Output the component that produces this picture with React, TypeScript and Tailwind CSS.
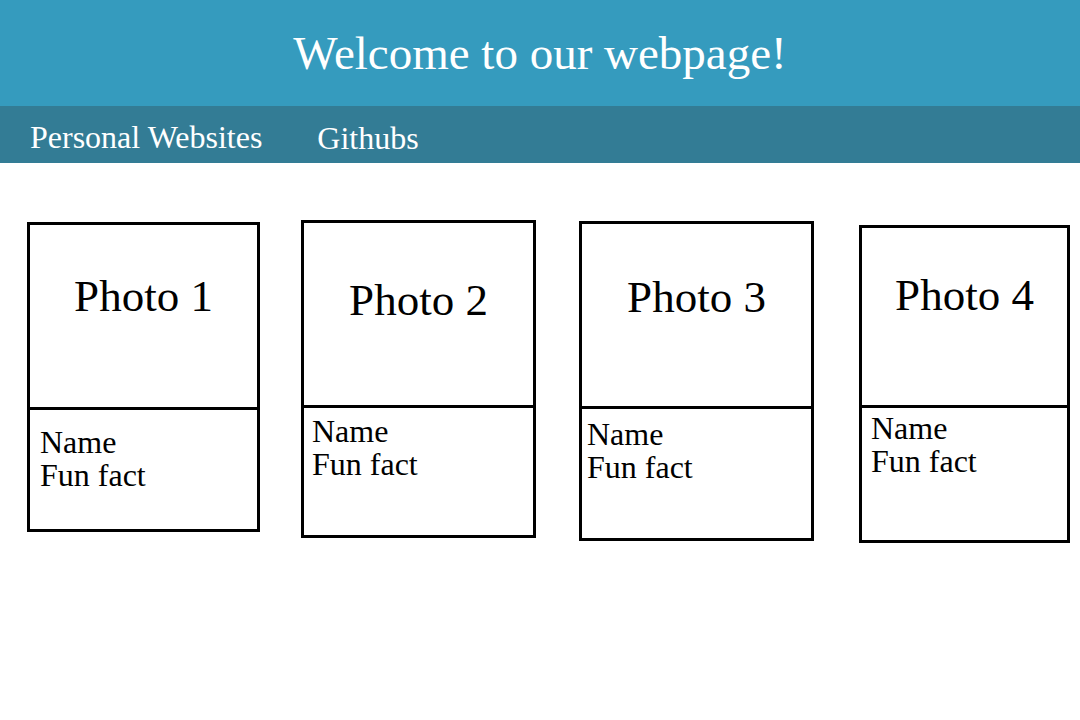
const serif = "[font-family:'Liberation_Serif','Times_New_Roman',serif]";

type Card = {
  label: string;
  box: string;
  top: string;
  photoPad: string;
  infoPad: string;
};

const cards: Card[] = [
  { label: "Photo 1", box: "ml-[27px] mt-[59px] w-[233px] h-[310px]", top: "h-[185px]", photoPad: "pt-[49px]", infoPad: "pt-[16px] pl-[10px]" },
  { label: "Photo 2", box: "ml-[41px] mt-[57px] w-[235px] h-[318px]", top: "h-[185px]", photoPad: "pt-[55px]", infoPad: "pt-[7px] pl-[8px]" },
  { label: "Photo 3", box: "ml-[43px] mt-[58px] w-[235px] h-[320px]", top: "h-[185px]", photoPad: "pt-[51px]", infoPad: "pt-[9px] pl-[5px]" },
  { label: "Photo 4", box: "ml-[45px] mt-[62px] w-[211px] h-[318px]", top: "h-[180px]", photoPad: "pt-[45px]", infoPad: "pt-[4px] pl-[9px]" },
];

export default function App() {
  return (
    <div className={`min-h-[720px] w-[1080px] bg-white ${serif}`}>
      <header className="flex h-[106px] items-center justify-center bg-[#359bbe]">
        <h1 className="text-[47px] leading-none text-white">Welcome to our webpage!</h1>
      </header>
      <nav className="flex h-[57px] items-center bg-[#337c95] pl-[30px] pt-[4px] text-white">
        <a className="text-[32px] leading-none">Personal Websites</a>
        <a className="ml-[55px] pt-[3px] text-[32px] leading-none">Githubs</a>
      </nav>
      <main className="flex items-start">
        {cards.map((card) => (
          <div key={card.label} className={`shrink-0 border-[3px] border-black ${card.box}`}>
            <div className={`border-b-[3px] border-black text-center text-[45px] leading-none text-black ${card.top} ${card.photoPad}`}>
              {card.label}
            </div>
            <div className={`text-[32px] leading-[33px] text-black ${card.infoPad}`}>
              <div>Name</div>
              <div>Fun fact</div>
            </div>
          </div>
        ))}
      </main>
    </div>
  );
}
